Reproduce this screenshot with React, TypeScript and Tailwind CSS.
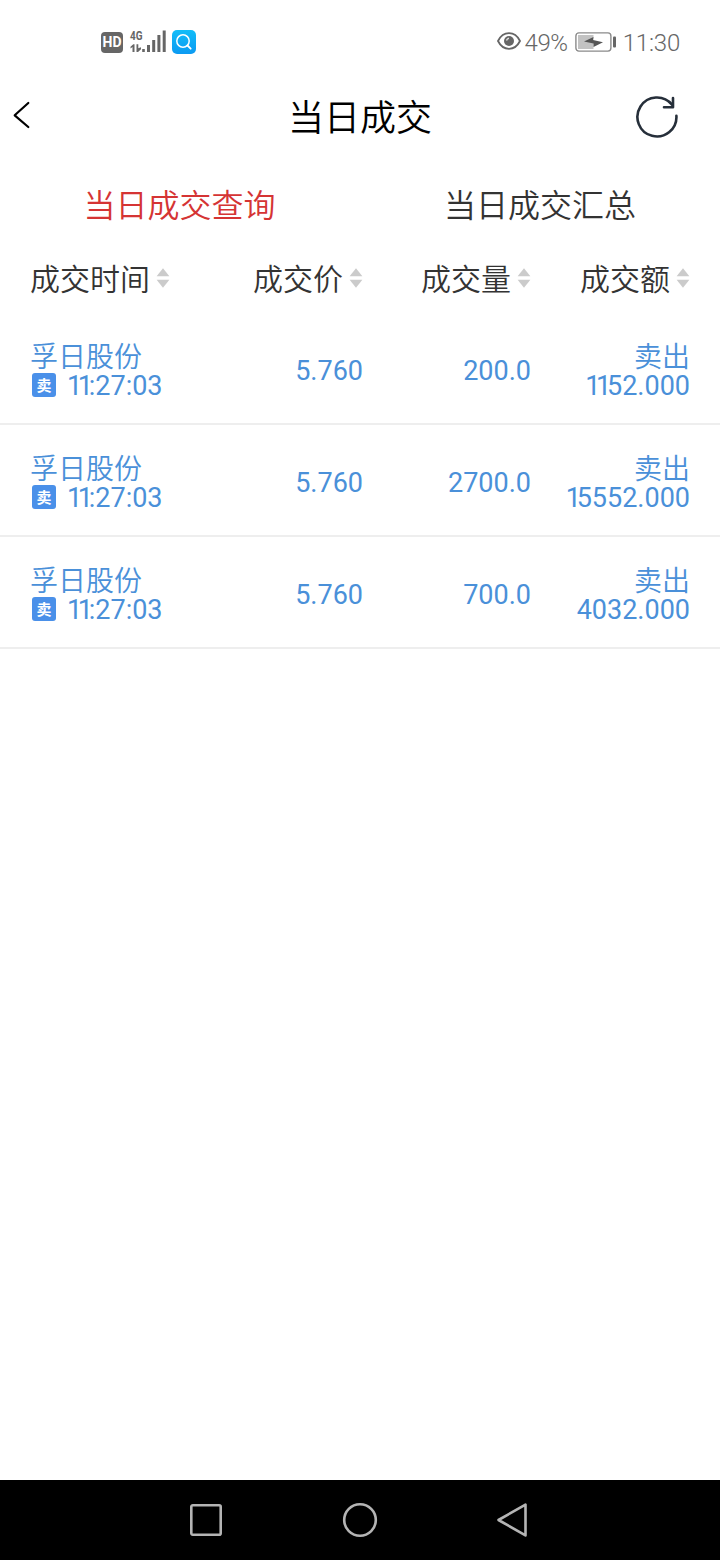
type Deal = { id: number; name: string; time: string; price: string; volume: string; side: string; amount: string };

const deals: Deal[] = [
  { id: 1, name: '孚日股份', time: '11:27:03', price: '5.760', volume: '200.0', side: '卖出', amount: '1152.000' },
  { id: 2, name: '孚日股份', time: '11:27:03', price: '5.760', volume: '2700.0', side: '卖出', amount: '15552.000' },
  { id: 3, name: '孚日股份', time: '11:27:03', price: '5.760', volume: '700.0', side: '卖出', amount: '4032.000' },
];

const COLUMNS = ['成交时间', '成交价', '成交量', '成交额'];
const GRID = 'grid grid-cols-[170px_163px_168px_159px] px-[30px]';

// leading ones are set tighter than the other figures
function Num({ value }: { value: string }) {
  const ones = value.match(/^1*/)![0];
  return (
    <span className="font-[Roboto,sans-serif] text-[27px] leading-[30px]">
      {ones && <span className="tracking-[-4.3px]">{ones}</span>}
      {value.slice(ones.length)}
    </span>
  );
}

function SortIcon() {
  return (
    <svg width="14" height="20" viewBox="0 0 14 20" className="ml-[6px] shrink-0" fill="#cbcbcb">
      <path d="M7 0.3 13.4 8.3H0.6Z" />
      <path d="M7 19.7 13.4 11.7H0.6Z" />
    </svg>
  );
}

function StatusBar() {
  return (
    <div className="flex h-20 items-center justify-between pl-[101px] pr-10 pt-[4px] font-[Roboto,sans-serif] font-normal text-[#666]">
      <div className="flex items-center">
        <span className="grid h-[21px] w-[22px] place-items-center rounded-[4px] bg-[#666] text-[14px] font-bold leading-none text-white">HD</span>
        <svg width="38" height="25" viewBox="0 0 38 25" className="ml-[6px] overflow-visible" fill="#666">
          <text x="1" y="10" fontSize="13" fontWeight="700" textLength="12.5" lengthAdjust="spacingAndGlyphs">4G</text>
          <path d="M1.5 16.800 4.300 14.200H5.500V22H3.500V17L1.500 18.500ZM7.500 14.200H9.300V18.300L12 17.300V19.300L9 22H7.500Z" />
          <rect x="13.200" y="19" width="2.600" height="3" />
          <rect x="18" y="15" width="3" height="7" />
          <rect x="23.200" y="10" width="3" height="12" />
          <rect x="28.400" y="5" width="3" height="17" />
          <rect x="33.700" y="0.500" width="3" height="21.500" />
        </svg>
        <svg width="24" height="24" viewBox="0 0 24 24" className="ml-[5px]">
          <defs>
            <linearGradient id="search" x1="0" y1="0" x2="0" y2="1">
              <stop offset="0" stopColor="#12bdf8" />
              <stop offset="1" stopColor="#0c9af2" />
            </linearGradient>
          </defs>
          <rect width="24" height="24" rx="5" fill="url(#search)" />
          <circle cx="11" cy="11" r="6.200" fill="none" stroke="#fff" strokeWidth="1.500" />
          <path d="m15.500 15.500 3.200 3.200" stroke="#fff" strokeWidth="1.800" strokeLinecap="round" />
        </svg>
      </div>
      <div className="flex items-center text-[24px] leading-none">
        <svg width="24" height="18" viewBox="0 0 24 18" className="mb-[2px]" fill="none" stroke="#666">
          <path d="M1 9C3.500 4 7.300 1.200 12 1.200S20.500 4 23 9c-2.500 5-6.300 7.800-11 7.800S3.500 14 1 9Z" strokeWidth="1.800" />
          <circle cx="12" cy="9" r="5" fill="#666" stroke="none" />
          <path d="M9.500 8.500a3 3 0 0 1 2.500-2.300" stroke="#ddd" strokeWidth="1.400" />
        </svg>
        <span className="ml-[4px] pt-[2px] font-[350] tracking-[-0.4px]">49%</span>
        <svg width="42" height="20" viewBox="0 0 42 20" className="ml-[7px]">
          <rect x="0.900" y="0.900" width="35" height="18.200" rx="3" fill="none" stroke="#8a8a8a" strokeWidth="1.400" />
          <rect x="3" y="3" width="15.500" height="14" fill="#c2c2c2" />
          <path d="M9 9.500 18.500 5 18 8 28 10.300 18.500 15 18.500 11.500Z" fill="#555" />
          <rect x="38" y="4.500" width="3" height="11" rx="1" fill="#666" />
        </svg>
        <span className="ml-[6px] pt-[2px] font-[350] tracking-[-0.2px]">11:30</span>
      </div>
    </div>
  );
}

function Header() {
  return (
    <header className="flex h-[75px] items-center justify-between pl-3 pr-[41px]">
      <svg width="20" height="30" viewBox="0 0 20 30" className="mb-[5px]" fill="none" stroke="#000" strokeWidth="2.200" strokeLinecap="round" strokeLinejoin="round">
        <path d="M16.300 3 2.700 15.300 16.300 27" />
      </svg>
      <h1 className="mb-[5px] ml-[53px] text-[36px] leading-none text-black">当日成交</h1>
      <svg width="44" height="44" viewBox="0 0 44 44" fill="none" stroke="#262f3a" strokeWidth="2.600" strokeLinecap="round" strokeLinejoin="round">
        <path d="M41.400 19.800A19.500 19.500 0 1 1 37 8.600" />
        <path d="M38 2v9.300h-9" />
      </svg>
    </header>
  );
}

export default function App() {
  return (
    <div className="flex h-[1560px] w-[720px] flex-col bg-white font-['Noto_Sans_CJK_SC',sans-serif] font-[350]">
      <StatusBar />
      <Header />

      <div className="grid h-[96px] grid-cols-2 place-items-center text-[32px] leading-none">
        <button className="mr-px text-[#d53434]">当日成交查询</button>
        <button className="text-[#333]">当日成交汇总</button>
      </div>

      <div className={`${GRID} h-[62px] items-start pt-px text-[30px] leading-[54px] text-[#333]`}>
        {COLUMNS.map((c, i) => (
          <div key={c} className={`flex items-center whitespace-nowrap ${i === 0 ? '' : 'justify-end'}`}>
            <span className="-mt-[2px]">{c}</span>
            <SortIcon />
          </div>
        ))}
      </div>

      <main className="flex-1 text-[#4a90d9]">
        {deals.map((d) => (
          <div key={d.id} className={`${GRID} h-28 items-center border-b-2 border-[#eee] pt-1 text-right font-normal`}>
            <div className="text-left">
              <div className="text-[28px] font-[350] leading-[30px]">{d.name}</div>
              <div className="flex h-[30px] items-center pl-[2px]">
                <span className="mr-[11px] grid h-6 w-6 place-items-center rounded-[3px] bg-[#4a90e9] pb-px text-[15px] font-bold leading-none text-white">卖</span>
                <div className="pt-[2px]">
                  <Num value={d.time} />
                </div>
              </div>
            </div>
            <div className="pt-[2px]">
              <Num value={d.price} />
            </div>
            <div className="pt-[2px]">
              <Num value={d.volume} />
            </div>
            <div>
              <div className="text-[28px] font-[350] leading-[30px]">{d.side}</div>
              <div className="flex h-[30px] items-center justify-end pt-[2px]">
                <Num value={d.amount} />
              </div>
            </div>
          </div>
        ))}
      </main>

      <nav className="flex h-20 items-center justify-center gap-[116px] bg-black">
        <svg width="36" height="36" viewBox="2 0 36 36" className="overflow-visible" fill="none" stroke="#b4b4b4" strokeWidth="2.600">
          <rect x="3.300" y="3.300" width="29.400" height="29.400" rx="1.500" />
        </svg>
        <svg width="36" height="36" viewBox="0 0 36 36" fill="none" stroke="#b4b4b4" strokeWidth="2.600">
          <circle cx="18" cy="18" r="15.800" />
        </svg>
        <svg width="36" height="36" viewBox="0 0 36 36" fill="none" stroke="#b4b4b4" strokeWidth="2.600" strokeLinejoin="round">
          <path d="M31.500 2.600v30.800L4.500 18Z" />
        </svg>
      </nav>
    </div>
  );
}
